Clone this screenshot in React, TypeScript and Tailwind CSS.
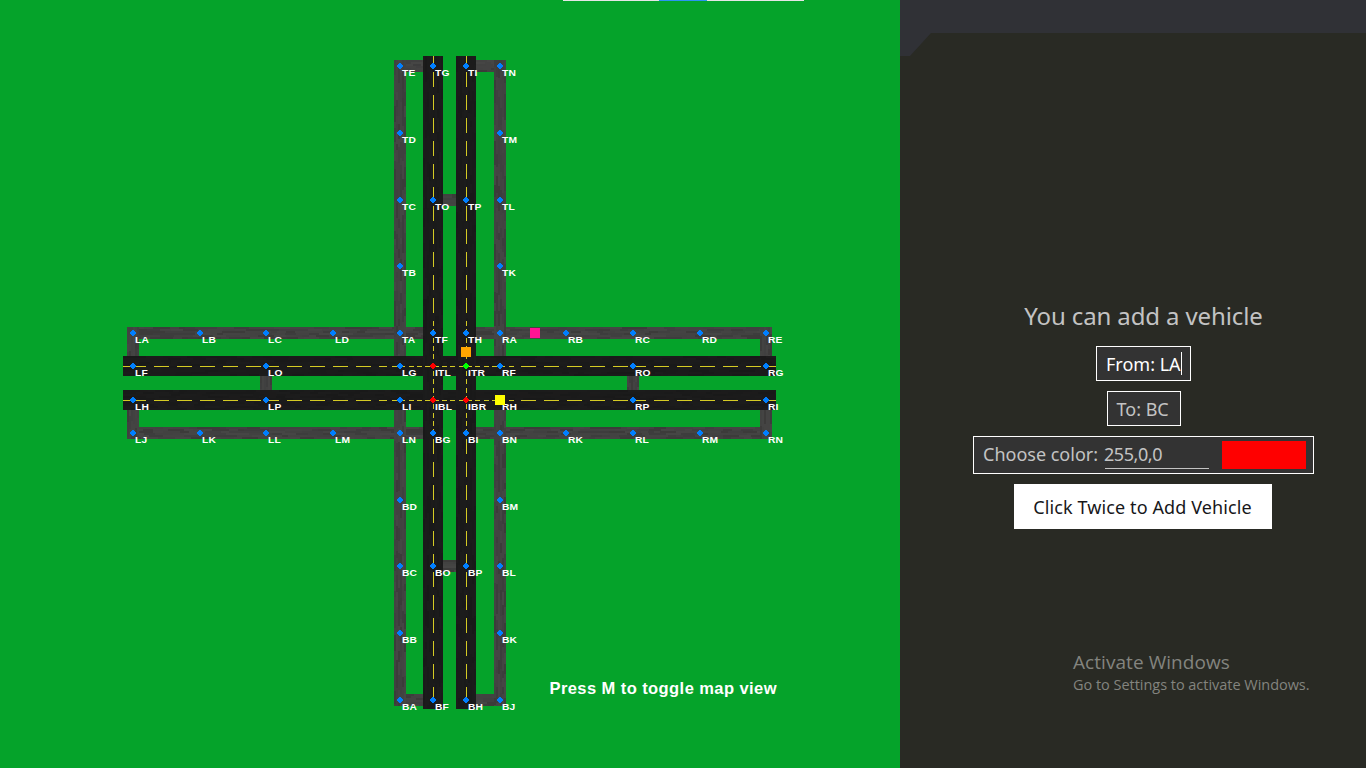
import React from "react";

type Node = [string, number, number];

const NODES: Node[] = [
  ["TE", 400, 66], ["TG", 433, 66], ["TI", 466, 66], ["TN", 500, 66],
  ["TD", 400, 133], ["TM", 500, 133],
  ["TC", 400, 200], ["TO", 433, 200], ["TP", 466, 200], ["TL", 500, 200],
  ["TB", 400, 266], ["TK", 500, 266],
  ["LA", 133, 333], ["LB", 200, 333], ["LC", 266, 333], ["LD", 333, 333],
  ["TA", 400, 333], ["TF", 433, 333], ["TH", 466, 333], ["RA", 500, 333],
  ["RB", 566, 333], ["RC", 633, 333], ["RD", 700, 333], ["RE", 766, 333],
  ["LF", 133, 366], ["LO", 266, 366], ["LG", 400, 366], ["ITL", 433, 366],
  ["ITR", 466, 366], ["RF", 500, 366], ["RO", 633, 366], ["RG", 766, 366],
  ["LH", 133, 400], ["LP", 266, 400], ["LI", 400, 400], ["IBL", 433, 400],
  ["IBR", 466, 400], ["RH", 500, 400], ["RP", 633, 400], ["RI", 766, 400],
  ["LJ", 133, 433], ["LK", 200, 433], ["LL", 266, 433], ["LM", 333, 433],
  ["LN", 400, 433], ["BG", 433, 433], ["BI", 466, 433], ["BN", 500, 433],
  ["RK", 566, 433], ["RL", 633, 433], ["RM", 700, 433], ["RN", 766, 433],
  ["BD", 400, 500], ["BM", 500, 500],
  ["BC", 400, 566], ["BO", 433, 566], ["BP", 466, 566], ["BL", 500, 566],
  ["BB", 400, 633], ["BK", 500, 633],
  ["BA", 400, 700], ["BF", 433, 700], ["BH", 466, 700], ["BJ", 500, 700],
];

const SIGNALS: Record<string, string> = {
  ITL: "#ff0000", IBL: "#ff0000", IBR: "#ff0000", ITR: "#00ff00",
};

type Box = [number, number, number, number];

const SIDE_H: Box[] = [
  [127, 327, 296, 12], [476, 327, 296, 12],
  [127, 427, 296, 12], [476, 427, 296, 12],
  [394, 60, 29, 12], [476, 60, 30, 12],
  [394, 694, 29, 12], [476, 694, 30, 12],
  [443, 194, 13, 12], [443, 560, 13, 12],
];
const SIDE_V: Box[] = [
  [394, 60, 12, 296], [494, 60, 12, 296],
  [394, 410, 12, 296], [494, 410, 12, 296],
  [127, 327, 12, 29], [760, 327, 12, 29],
  [127, 410, 12, 29], [760, 410, 12, 29],
  [260, 376, 12, 14], [627, 376, 12, 14],
];
const MAIN_H: Box[] = [[123, 356, 653, 20], [123, 390, 653, 20]];
const MAIN_V: Box[] = [[423, 56, 20, 653], [456, 56, 20, 653]];

const SIDE_TONES = ["#3d3d3d", "#424241", "#444443", "#404040", "#434342", "#3c3b3a", "#464645"];
const MAIN_TONES = ["#191919", "#1b1b1b", "#1c1b1b", "#1a1a1a", "#1c1c1c"];

function Asphalt({ box, vertical, tones, seed }: { box: Box; vertical: boolean; tones: string[]; seed: number }) {
  const [x, y, w, h] = box;
  let s = seed * 7919 + 13;
  const rnd = () => {
    s = (s * 1103515245 + 12345) % 2147483648;
    return s / 2147483648;
  };
  const out: React.ReactElement[] = [];
  const length = vertical ? h : w;
  const width = vertical ? w : h;
  for (let c = 0; c < width; c += 2) {
    let p = 0;
    while (p < length) {
      const step = Math.min(length - p, 6 + Math.floor(rnd() * 12));
      const fill = tones[Math.floor(rnd() * tones.length)];
      out.push(
        vertical ? (
          <rect key={`${c}-${p}`} x={x + c} y={y + p} width={2} height={step} fill={fill} />
        ) : (
          <rect key={`${c}-${p}`} x={x + p} y={y + c} width={step} height={2} fill={fill} />
        )
      );
      p += step;
    }
  }
  return <g>{out}</g>;
}

const range = (start: number, count: number, period: number, len: number): [number, number][] =>
  Array.from({ length: count }, (_, i) => [Math.round(start + i * period), len]);

const H_DASHES: [number, number][] = [
  [123, 8], ...range(131, 6, 23, 15), ...range(264, 5, 23, 15), [379, 8],
  ...range(392, 15, 8.33, 5),
  ...range(521, 5, 23, 15), ...range(631, 6, 23, 15), [769, 7],
];
const V_DASHES: [number, number][] = [
  [56, 8], ...range(72, 5, 23, 15), [187, 10], ...range(206, 5, 23, 15),
  ...range(321, 14, 8.33, 5),
  ...range(439, 5, 23, 15), [554, 10], ...range(572, 6, 23, 15),
];

function RoadMap() {
  return (
    <svg width="900" height="768" viewBox="0 0 900 768" shapeRendering="crispEdges" className="block">
      {SIDE_H.map((b, i) => <Asphalt key={`a${i}`} box={b} vertical={false} tones={SIDE_TONES} seed={i + 1} />)}
      {SIDE_V.map((b, i) => <Asphalt key={`b${i}`} box={b} vertical tones={SIDE_TONES} seed={i + 21} />)}
      {MAIN_H.map((b, i) => <Asphalt key={`c${i}`} box={b} vertical={false} tones={MAIN_TONES} seed={i + 41} />)}
      {MAIN_V.map((b, i) => <Asphalt key={`d${i}`} box={b} vertical tones={MAIN_TONES} seed={i + 51} />)}
      <g fill="#d5cb24">
        {[366, 400].map((y) => H_DASHES.map(([p, l]) => <rect key={`${y}-${p}`} x={p} y={y} width={l} height={1} />))}
        {[433, 466].map((x) => V_DASHES.map(([p, l]) => <rect key={`${x}-${p}`} x={x} y={p} width={1} height={l} />))}
      </g>
      {NODES.map(([name, x, y]) => (
        <path
          key={name}
          fill={SIGNALS[name] ?? "#007fff"}
          d={`M${x - 1} ${y - 3}h2v1h1v1h1v2h-1v1h-1v1h-2v-1h-1v-1h-1v-2h1v-1h1z`}
        />
      ))}
      <g fill="#ffffff" className="font-['Liberation_Sans',sans-serif] text-[9.5px] font-bold">
        {NODES.map(([name, x, y]) => (
          <text key={name} transform={`translate(${x + 2} ${y + 10}) scale(1.08 1)`} letterSpacing={0.2}>
            {name}
          </text>
        ))}
      </g>
      <rect x="530" y="328" width="10" height="10" fill="#ff1493" />
      <rect x="461" y="347" width="10" height="10" fill="#ffa500" />
      <rect x="495" y="395" width="10" height="10" fill="#ffff00" />
      <text x="549.5" y="694" textLength="227" fill="#ffffff" className="font-['Liberation_Sans',sans-serif] text-[16.5px] font-bold">
        Press M to toggle map view
      </text>
    </svg>
  );
}

function VehicleForm() {
  return (
    <form className="flex w-[341px] flex-col items-center gap-[10px] text-[18px] leading-[25px] text-[#c3c3c3]">
      <h1 className="h-[36px] whitespace-nowrap text-[24px] leading-[31px] tracking-[-0.12px]">You can add a vehicle</h1>
      <div className="flex h-[35px] w-[95px] items-center whitespace-nowrap border border-white bg-[#333333] pl-[9px] text-white">
        <span className="pt-[2px]">From: LA</span>
        <span className="h-[23px] w-px bg-white" />
      </div>
      <div className="flex h-[35px] w-[74px] items-center whitespace-nowrap border border-white bg-[#333333] pl-[9px] pt-[2px]">To: BC</div>
      <div className="flex h-[38px] w-[341px] items-start whitespace-nowrap border border-white bg-[#333333] pl-[9px] pt-[4px]">
        <span className="w-[122px] pt-px">Choose color:</span>
        <span className="h-[28px] w-[104px] border-b border-[#c3c3c3] pt-px">
          <span className="-ml-px tracking-[-0.45px]">255,0,0</span>
        </span>
        <span className="ml-[13px] h-[28px] w-[84px] bg-[#ff0000]" />
      </div>
      <button type="button" className="mr-[2px] h-[45px] w-[258px] whitespace-nowrap bg-white pt-[2px] tracking-[0.1px] text-[#17171a]">
        Click Twice to Add Vehicle
      </button>
    </form>
  );
}

export default function App() {
  return (
    <div className="flex h-[768px] w-[1366px] overflow-hidden bg-[#292a24]">
      <main className="relative w-[900px] shrink-0 bg-[#05a32a]">
        <RoadMap />
        <div className="absolute left-[563px] top-0 flex h-px w-[241px] bg-[#e6e6e6]">
          <div className="ml-[96px] w-[48px] bg-[#2b94f3]" />
        </div>
      </main>
      <aside className="flex w-[466px] flex-col font-['Noto_Sans',sans-serif]">
        <svg width="466" height="56" className="block shrink-0">
          <path d="M0 0H466V33H31L10 56H0Z" fill="#303136" />
        </svg>
        <div className="ml-[73px] mt-[244px]">
          <VehicleForm />
        </div>
        <div className="ml-[173px] mt-[120px] whitespace-nowrap font-['Open_Sans',sans-serif] text-[#83847f]">
          <p className="text-[19px] leading-[26px] tracking-[0.06px]">Activate Windows</p>
          <p className="text-[14.5px] leading-[20px] tracking-[-0.03px]">Go to Settings to activate Windows.</p>
        </div>
      </aside>
    </div>
  );
}
